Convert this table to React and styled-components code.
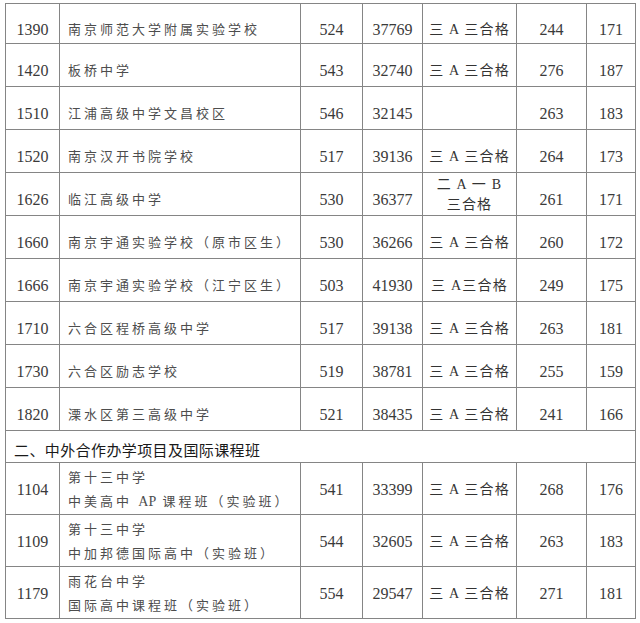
import React from 'react';
import styled, { createGlobalStyle } from 'styled-components';

const GlobalStyle = createGlobalStyle`
  html, body {
    margin: 0;
    padding: 0;
    background: #ffffff;
  }
`;

const Page = styled.div`
  padding: 3px 0 0 5px;
  width: 640px;
  height: 623px;
  box-sizing: border-box;
  background: #ffffff;
  overflow: hidden;
`;

const Table = styled.table`
  border-collapse: collapse;
  table-layout: fixed;
  width: 630px;
  color: #3a3a3a;
`;

const Row = styled.tr`
  height: ${(p) => p.$h}px;
`;

const Cell = styled.td`
  border: 1px solid #858585;
  padding: ${(p) => p.$pad}px 0 0 0;
  text-align: center;
  vertical-align: middle;
  font-family: 'Liberation Serif', 'Noto Sans CJK SC', serif;
  font-size: 16px;
  line-height: 20px;
`;

const NameCell = styled(Cell)`
  text-align: left;
  padding-left: 8px;
  font-size: 13px;
  letter-spacing: 3px;
  line-height: ${(p) => (p.$lines > 1 ? '24px' : '20px')};
  color: #4d4d4d;
  white-space: nowrap;
`;

const Latin = styled.span`
  letter-spacing: 0;
  font-size: 14px;
`;

const GradeCell = styled(Cell)`
  font-size: 14px;
  letter-spacing: 1.2px;
  line-height: 20px;
  color: #333333;
  white-space: nowrap;
`;

const SectionCell = styled.td`
  border: 1px solid #858585;
  padding: 6px 0 0 8px;
  font-family: 'Noto Sans CJK SC', sans-serif;
  font-size: 15px;
  letter-spacing: 0.4px;
  color: #1a1a1a;
  vertical-align: middle;
`;

const Line = styled.div``;

const rowsA = [
  { code: '1390', name: ['南京师范大学附属实验学校'], score: '524', rank: '37769', grade: ['三 A 三合格'], a: '244', b: '171' },
  { code: '1420', name: ['板桥中学'], score: '543', rank: '32740', grade: ['三 A 三合格'], a: '276', b: '187' },
  { code: '1510', name: ['江浦高级中学文昌校区'], score: '546', rank: '32145', grade: [], a: '263', b: '183' },
  { code: '1520', name: ['南京汉开书院学校'], score: '517', rank: '39136', grade: ['三 A 三合格'], a: '264', b: '173' },
  { code: '1626', name: ['临江高级中学'], score: '530', rank: '36377', grade: ['二 A 一 B', '三合格'], a: '261', b: '171' },
  { code: '1660', name: ['南京宇通实验学校（原市区生）'], score: '530', rank: '36266', grade: ['三 A 三合格'], a: '260', b: '172' },
  { code: '1666', name: ['南京宇通实验学校（江宁区生）'], score: '503', rank: '41930', grade: ['三 A三合格'], a: '249', b: '175' },
  { code: '1710', name: ['六合区程桥高级中学'], score: '517', rank: '39138', grade: ['三 A 三合格'], a: '263', b: '181' },
  { code: '1730', name: ['六合区励志学校'], score: '519', rank: '38781', grade: ['三 A 三合格'], a: '255', b: '159' },
  { code: '1820', name: ['溧水区第三高级中学'], score: '521', rank: '38435', grade: ['三 A 三合格'], a: '241', b: '166' },
];

const rowsB = [
  { code: '1104', name: ['第十三中学', <>中美高中 <Latin>AP</Latin> 课程班（实验班）</>], score: '541', rank: '33399', grade: ['三 A 三合格'], a: '268', b: '176' },
  { code: '1109', name: ['第十三中学', '中加邦德国际高中（实验班）'], score: '544', rank: '32605', grade: ['三 A 三合格'], a: '263', b: '183' },
  { code: '1179', name: ['雨花台中学', '国际高中课程班（实验班）'], score: '554', rank: '29547', grade: ['三 A 三合格'], a: '271', b: '181' },
];

const widths = [54, 241, 62, 60, 94, 70, 49];

function DataRow({ r, h, pad }) {
  return (
    <Row $h={h}>
      <Cell $pad={pad}>{r.code}</Cell>
      <NameCell $pad={pad} $lines={r.name.length}>
        {r.name.map((n, i) => (
          <Line key={i}>{n}</Line>
        ))}
      </NameCell>
      <Cell $pad={pad}>{r.score}</Cell>
      <Cell $pad={pad}>{r.rank}</Cell>
      <GradeCell $pad={r.grade.length > 1 ? 2 : pad}>
        {r.grade.map((g) => (
          <Line key={g}>{g}</Line>
        ))}
      </GradeCell>
      <Cell $pad={pad}>{r.a}</Cell>
      <Cell $pad={pad}>{r.b}</Cell>
    </Row>
  );
}

export default function App() {
  return (
    <Page>
      <GlobalStyle />
      <Table>
        <colgroup>
          {widths.map((w, i) => (
            <col key={i} style={{ width: w }} />
          ))}
        </colgroup>
        <tbody>
          {rowsA.map((r, i) => (
            <DataRow key={r.code} r={r} h={i === 0 ? 40 : 43} pad={12} />
          ))}
          <Row $h={32}>
            <SectionCell colSpan={7}>二、中外合作办学项目及国际课程班</SectionCell>
          </Row>
          {rowsB.map((r) => (
            <DataRow key={r.code} r={r} h={51} pad={3} />
          ))}
        </tbody>
      </Table>
    </Page>
  );
}
